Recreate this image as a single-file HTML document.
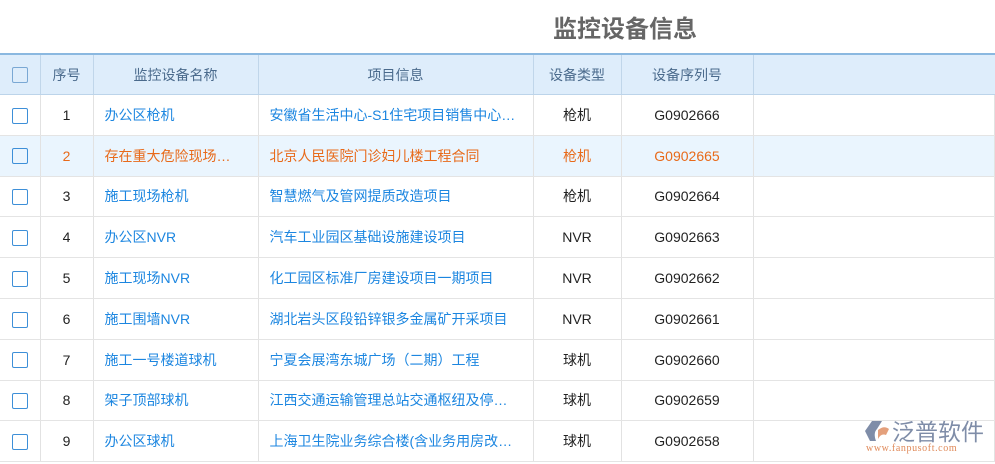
<!DOCTYPE html>
<html><head><meta charset="utf-8"><style>
body{margin:0;width:995px;height:464px;overflow:hidden;background:#fff;font-family:"Liberation Sans","Noto Sans CJK SC",sans-serif;position:relative}
.title{position:absolute;left:553px;top:9px;font-size:24px;font-weight:bold;color:#666;letter-spacing:0px}
table{position:absolute;left:0;top:53px;border-collapse:collapse;table-layout:fixed;width:995px}
td,th{border-right:1px solid #e2e2e2;border-bottom:1px solid #e4e4e4;height:39.8px;padding:0;font-size:14px;text-align:center;white-space:nowrap;overflow:hidden}
th{background:#deedfb;color:#4a6a8c;font-weight:normal;border-top:2px solid #8ab8e0;border-right-color:#c0d6ea;border-bottom-color:#bcd4ea;height:39px}
td.l{text-align:left;padding-left:11px;color:#1c86e0;text-overflow:ellipsis}
td{color:#222}
tr.h td{background:#eaf5fe;color:#e86a1a}
tr.h td.l{color:#e86a1a}
.cb{display:inline-block;width:14px;height:14px;border:1px solid #3d8fd8;border-radius:2px;vertical-align:middle}
th .cb{border-color:#7aa8d4}
</style></head><body>
<div class="title">监控设备信息</div>
<table>
<colgroup><col style="width:40px"><col style="width:53px"><col style="width:165px"><col style="width:275px"><col style="width:88px"><col style="width:132px"><col></colgroup>
<tr><th><span class="cb"></span></th><th>序号</th><th>监控设备名称</th><th>项目信息</th><th>设备类型</th><th>设备序列号</th><th style="border-right:0"></th></tr>
<tr><td><span class="cb"></span></td><td>1</td><td class="l">办公区枪机</td><td class="l">安徽省生活中心-S1住宅项目销售中心…</td><td>枪机</td><td>G0902666</td><td></td></tr>
<tr class="h"><td><span class="cb"></span></td><td>2</td><td class="l">存在重大危险现场…</td><td class="l">北京人民医院门诊妇儿楼工程合同</td><td>枪机</td><td>G0902665</td><td></td></tr>
<tr><td><span class="cb"></span></td><td>3</td><td class="l">施工现场枪机</td><td class="l">智慧燃气及管网提质改造项目</td><td>枪机</td><td>G0902664</td><td></td></tr>
<tr><td><span class="cb"></span></td><td>4</td><td class="l">办公区NVR</td><td class="l">汽车工业园区基础设施建设项目</td><td>NVR</td><td>G0902663</td><td></td></tr>
<tr><td><span class="cb"></span></td><td>5</td><td class="l">施工现场NVR</td><td class="l">化工园区标准厂房建设项目一期项目</td><td>NVR</td><td>G0902662</td><td></td></tr>
<tr><td><span class="cb"></span></td><td>6</td><td class="l">施工围墙NVR</td><td class="l">湖北岩头区段铅锌银多金属矿开采项目</td><td>NVR</td><td>G0902661</td><td></td></tr>
<tr><td><span class="cb"></span></td><td>7</td><td class="l">施工一号楼道球机</td><td class="l">宁夏会展湾东城广场（二期）工程</td><td>球机</td><td>G0902660</td><td></td></tr>
<tr><td><span class="cb"></span></td><td>8</td><td class="l">架子顶部球机</td><td class="l">江西交通运输管理总站交通枢纽及停…</td><td>球机</td><td>G0902659</td><td></td></tr>
<tr><td><span class="cb"></span></td><td>9</td><td class="l">办公区球机</td><td class="l">上海卫生院业务综合楼(含业务用房改…</td><td>球机</td><td>G0902658</td><td></td></tr>
</table>
<svg style="position:absolute;left:864px;top:419px" width="26" height="26" viewBox="0 0 26 26"><path d="M8 2 L18 2 L13 10 Q9 14 12 22 L6 22 L1 12 Z" fill="#7f8da8"/><path d="M14 11 Q20 6 25 10 L22 16 Q17 14 14 20 Z" fill="#e4a07c"/></svg>
<div style="position:absolute;left:892px;top:416px;font-size:23px;color:#7f8da8;font-family:'Noto Sans CJK SC',sans-serif;line-height:28px">泛普软件</div>
<div style="position:absolute;left:866px;top:443px;font-size:10px;color:#e08a5a;font-family:'Liberation Serif',serif;letter-spacing:0.6px">www.fanpusoft.com</div>
</body></html>
